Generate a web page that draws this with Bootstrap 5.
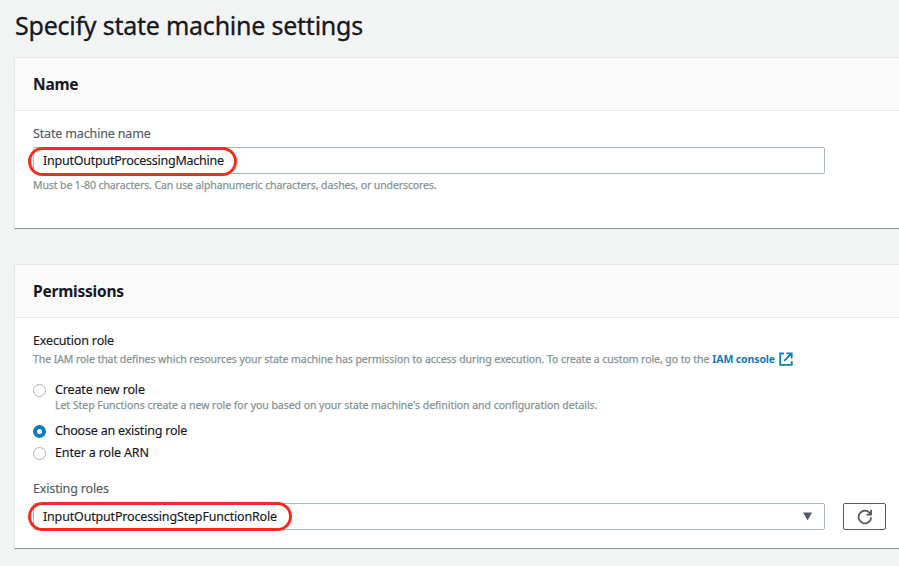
<!DOCTYPE html>
<html lang="en">
<head>
<meta charset="utf-8">
<meta name="viewport" content="width=device-width, initial-scale=1">
<title>Specify state machine settings</title>
<link href="https://cdn.jsdelivr.net/npm/bootstrap@5.3.0/dist/css/bootstrap.min.css" rel="stylesheet">
<style>
body{background:#f2f3f3;color:#16191f;font-family:"Noto Sans","Open Sans",sans-serif;font-size:12.5px;line-height:18px;letter-spacing:-.15px;-webkit-text-stroke:.15px currentColor;overflow:hidden;white-space:nowrap}
main{padding:8px 0 0 14px}
.page-title{font-size:25px;line-height:34px;font-weight:400;letter-spacing:-.23px;margin:0 0 15px 1px;-webkit-text-stroke:.3px currentColor}
.panel{border:1px solid #e6e9e9;border-right:0;border-bottom:1px solid #879596;border-radius:0;margin-bottom:35px}
.panel>.card-header{background:#fafafa;border-bottom:1px solid #eaeded;border-radius:0;height:53px;padding:0 18px}
.panel>.card-body{padding:14px 18px 0}
.panel h2{font-size:15.5px;font-weight:700;line-height:22px;letter-spacing:-.22px;margin:0;-webkit-text-stroke:0}
.panel-name{height:172px}
.panel-permissions{height:285px}
.field{width:792px;flex:none}
.field-label{color:#545b64}
.hint{color:#879596;font-size:10.5px;line-height:16px;letter-spacing:-.07px;-webkit-text-stroke:.25px currentColor}
.hint-name{margin-top:3px;letter-spacing:-.1px}
.hint-role{margin-top:1px}
.hint-option{letter-spacing:-.04px;line-height:14px;margin-top:-1px}
.field .form-control{height:27px;border:1px solid #aab7b8;border-radius:2px;padding:0 12px 0 9px;font-size:12.5px;line-height:25px;letter-spacing:-.24px;color:#16191f;background:#fff}
.field .role-select{letter-spacing:-.17px;line-height:23px;padding-bottom:1px}
.callout-ring{position:absolute;left:-5px;top:0;height:29px;border:3px solid #fa2a1e;border-radius:14.5px;pointer-events:none}
.ring-name{width:209px}
.ring-role{width:264px;top:-1px}
.role-options{margin-top:14px}
.role-option{padding:0;margin:0;min-height:0;gap:9px}
.role-option+.role-option{margin-top:4px}
.role-option .form-check-input{width:13px;height:13px;margin:3px 0 0;border:1px solid #aab7b8;float:none;flex:none}
.role-option .form-check-input:checked{background:#fff;border:4px solid #0f7dbd}
.role-option.choose-option{margin-top:10px}
.choose-text{letter-spacing:-.2px}
.select-label{margin:18px 0 5px}
.iam-link{color:#0f7dbd;font-weight:700;letter-spacing:-.12px;text-decoration:none;gap:4px;margin-left:3px;-webkit-text-stroke:0}
.select-row{gap:18px}
.refresh{width:43px;height:27px;border:1px solid #545b64;border-radius:2px;color:#545b64;background:#fff}
</style>
<script src="https://cdn.jsdelivr.net/npm/bootstrap@5.3.0/dist/js/bootstrap.bundle.min.js" defer></script>
</head>
<body>
<main>
<h1 class="page-title">Specify state machine settings</h1>
<section class="card panel panel-name">
  <div class="card-header d-flex align-items-center"><h2>Name</h2></div>
  <div class="card-body">
    <label class="field-label d-block mb-1" for="machine">State machine name</label>
    <div class="field position-relative">
      <input class="form-control" id="machine" type="text" value="InputOutputProcessingMachine">
      <span class="callout-ring ring-name"></span>
    </div>
    <div class="hint hint-name">Must be 1-80 characters. Can use alphanumeric characters, dashes, or underscores.</div>
  </div>
</section>
<section class="card panel panel-permissions">
  <div class="card-header d-flex align-items-center"><h2>Permissions</h2></div>
  <div class="card-body">
    <div>Execution role</div>
    <div class="hint hint-role d-flex align-items-center"><span>The IAM role that defines which resources your state machine has permission to access during execution. To create a custom role, go to the</span>
      <a class="iam-link d-flex align-items-center" href="#"><span>IAM console</span>
      <svg width="14" height="14" viewBox="0 0 14 14" fill="none" stroke="currentColor" stroke-width="1.8"><path d="M4.8 1.5H1.2v11.3h11.6V9.2M7.4 1.4h5.3v5.2M12.6 1.5 5.2 8.8"/></svg></a>
    </div>
    <div class="role-options">
      <div class="form-check role-option d-flex">
        <input class="form-check-input" type="radio" name="role" id="create">
        <label for="create"><span class="d-block">Create new role</span><span class="hint hint-option d-block">Let Step Functions create a new role for you based on your state machine's definition and configuration details.</span></label>
      </div>
      <div class="form-check role-option choose-option d-flex">
        <input class="form-check-input" type="radio" name="role" id="choose" checked>
        <label for="choose" class="choose-text">Choose an existing role</label>
      </div>
      <div class="form-check role-option d-flex">
        <input class="form-check-input" type="radio" name="role" id="enter">
        <label for="enter">Enter a role ARN</label>
      </div>
    </div>
    <div class="field-label select-label">Existing roles</div>
    <div class="d-flex select-row">
      <div class="field position-relative">
        <div class="form-control role-select d-flex align-items-center justify-content-between" role="combobox"><span>InputOutputProcessingStepFunctionRole</span>
          <svg width="9" height="9" viewBox="0 0 9 9" fill="#545b64"><path d="M0 .5h9L4.5 8.5z"/></svg>
        </div>
        <span class="callout-ring ring-role"></span>
      </div>
      <button class="btn refresh p-0 d-flex flex-shrink-0 align-items-center justify-content-center" type="button" aria-label="Refresh">
        <svg width="16" height="16" viewBox="0 0 16 16" fill="none" stroke="currentColor" stroke-width="1.8"><path d="M14.2 8.4A6.3 6.3 0 1 1 12.4 3.6L14 5.3M14.1 .8v4.9H9.4"/></svg>
      </button>
    </div>
  </div>
</section>
</main>
</body>
</html>
